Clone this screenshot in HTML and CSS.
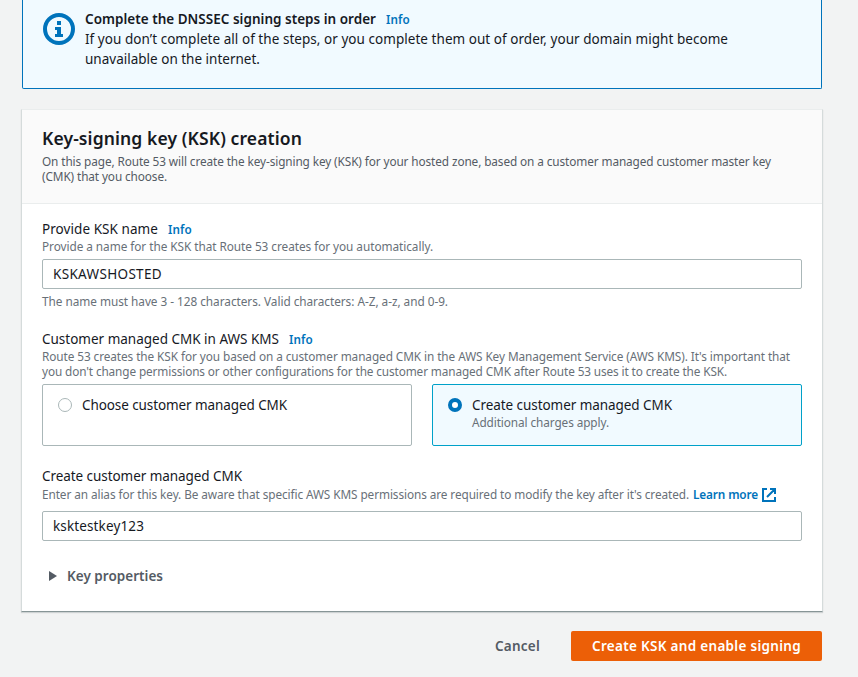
FILE: index.html
```html
<!DOCTYPE html>
<html lang="en">
<head>
<meta charset="utf-8">
<title>Enable DNSSEC signing</title>
<link rel="stylesheet" href="styles.css">
</head>
<body>
<main>
  <section class="alert">
    <svg class="alert-icon" width="32" height="32" viewBox="0 0 32 32"><circle cx="16" cy="16" r="14" fill="none" stroke="#0073bb" stroke-width="4"/><path d="M14 8h4v4h-4zM12 14h6v7h2v3h-8v-3h2v-4h-2z" fill="#0073bb"/></svg>
    <div class="alert-text">
      <div><b><span class="t" data-w="291">Complete the DNSSEC signing steps in order</span></b><a class="info">Info</a></div>
      <div><span class="t" data-w="643">If you don’t complete all of the steps, or you complete them out of order, your domain might become</span></div>
      <div><span class="t" data-w="175">unavailable on the internet.</span></div>
    </div>
  </section>
  <section class="card">
    <header class="card-head">
      <h2><span class="t" data-w="260">Key-signing key (KSK) creation</span></h2>
      <p class="small"><span class="t" data-w="729">On this page, Route 53 will create the key-signing key (KSK) for your hosted zone, based on a customer managed customer master key</span></p>
      <p class="small"><span class="t" data-w="125">(CMK) that you choose.</span></p>
    </header>
    <div class="card-body">
      <div class="label"><span class="t" data-w="116">Provide KSK name</span><a class="info">Info</a></div>
      <p class="small"><span class="t" data-w="391">Provide a name for the KSK that Route 53 creates for you automatically.</span></p>
      <div class="input"><span class="t" data-w="109">KSKAWSHOSTED</span></div>
      <p class="small hint"><span class="t" data-w="406">The name must have 3 - 128 characters. Valid characters: A-Z, a-z, and 0-9.</span></p>
      <div class="label kms"><span class="t" data-w="237">Customer managed CMK in AWS KMS</span><a class="info">Info</a></div>
      <p class="small"><span class="t" data-w="748">Route 53 creates the KSK for you based on a customer managed CMK in the AWS Key Management Service (AWS KMS). It's important that</span></p>
      <p class="small"><span class="t" data-w="685">you don't change permissions or other configurations for the customer managed CMK after Route 53 uses it to create the KSK.</span></p>
      <div class="tiles">
        <div class="tile"><i class="radio"></i><div class="label"><span class="t" data-w="205">Choose customer managed CMK</span></div></div>
        <div class="tile on"><i class="radio"></i><div><div class="label"><span class="t" data-w="200">Create customer managed CMK</span></div><p class="small"><span class="t" data-w="137">Additional charges apply.</span></p></div></div>
      </div>
      <div class="label create"><span class="t" data-w="200">Create customer managed CMK</span></div>
      <p class="small alias"><span class="t" data-w="647">Enter an alias for this key. Be aware that specific AWS KMS permissions are required to modify the key after it's created.</span><a class="learn"><span class="t" data-w="65">Learn more</span><svg width="14" height="14" viewBox="0 0 14 14" fill="none" stroke="#0073bb" stroke-width="2"><path d="M5 1H1v12h12V9M8 1h5v5M12.5 1.5L5 9"/></svg></a></p>
      <div class="input alias-input"><span class="t" data-w="91">ksktestkey123</span></div>
      <div class="expand"><svg width="10" height="12" viewBox="0 0 10 12"><path d="M1 1l8 5-8 5z" fill="#545b64"/></svg><span class="t" data-w="96">Key properties</span></div>
    </div>
  </section>
  <footer><span class="cancel"><span class="t" data-w="45">Cancel</span></span><span class="primary"><span class="t" data-w="209">Create KSK and enable signing</span></span></footer>
</main>
<script src="fit.js"></script>
</body>
</html>
```

FILE: fit.js
```js
document.querySelectorAll('.t').forEach(function (el) {
  var target = parseFloat(el.dataset.w);
  var gap = (target - el.getBoundingClientRect().width) / el.textContent.length;
  el.style.letterSpacing = gap + 'px';
});
```

FILE: styles.css
```css
* { box-sizing: border-box; }
body { margin: 0; background: #f2f3f3; color: #16191f; font: 13.5px/20px "Noto Sans", "Open Sans", sans-serif; height: 677px; overflow: hidden; }
main { width: 802px; margin-left: 21px; }
p, h2 { margin: 0; }
.t { white-space: nowrap; }
b { font-weight: 650; }
.alert { display: flex; height: 89px; margin: 0 0 0 1px; width: 800px; padding: 9px 20px; background: #f1faff; border: 1px solid #0073bb; border-top: 0; border-radius: 0 0 2px 2px; }
.alert-icon { margin-top: 4px; flex: none; }
.alert-text { margin-left: 10px; }
.info { color: #0073bb; font-size: 11.7px; line-height: 1; font-weight: 650; letter-spacing: .1px; margin-left: 10px; }
.card { margin-top: 20px; height: 503px; background: #fff; border: 1px solid #d5dbdb; border-top-color: #eaeded; border-bottom-color: #879596; box-shadow: 0 1px 1px rgba(0,28,36,.15); }
.card-head { height: 94px; padding: 17px 20px 0; background: #fafafa; border-bottom: 1px solid #eaeded; }
h2 { font-size: 17.5px; line-height: 22px; font-weight: 650; margin-bottom: 5px; }
.small { color: #687078; font-size: 11.8px; line-height: 15px; }
.card-head .small { color: #545b64; }
.card-body { padding: 15px 20px; }
.label { height: 20px; line-height: 20px; }
.input { height: 30px; margin-top: 5px; padding: 4px 10px; background: #fff; border: 1px solid #aab7b8; border-radius: 2px; }
.hint { margin-top: 5px; }
.kms { margin-top: 20px; }
.tiles { display: grid; grid-template-columns: 370px 370px; gap: 20px; margin-top: 5px; }
.tile { display: flex; height: 62px; border: 1px solid #aab7b8; border-radius: 2px; padding: 10px 15px; }
.tile.on { border-color: #00a1c9; background: #f1faff; }
.radio { flex: none; width: 14px; height: 14px; margin: 3px 10px 0 0; border: 1px solid #aab7b8; border-radius: 50%; background: #fff; }
.on .radio { border: 4px solid #0073bb; }
.create { margin-top: 20px; }
.alias { display: flex; align-items: center; height: 15px; margin-top: 1px; }
.learn { display: flex; align-items: center; color: #0073bb; font-weight: 650; margin-left: 4px; }
.learn svg { margin-left: 4px; }
.alias-input { margin-top: 9px; }
.expand { display: flex; align-items: center; margin-top: 25px; padding-left: 6px; color: #545b64; font-weight: 650; }
.expand svg { margin-right: 9px; }
footer { display: flex; justify-content: flex-end; align-items: center; height: 30px; margin: 19px 1px 0; font-weight: 650; }
.cancel { color: #545b64; margin-right: 31px; }
.primary { width: 251px; height: 30px; padding: 5px 0 0 21px; color: #fff; background: #ec5f07; border-radius: 2px; }
```
